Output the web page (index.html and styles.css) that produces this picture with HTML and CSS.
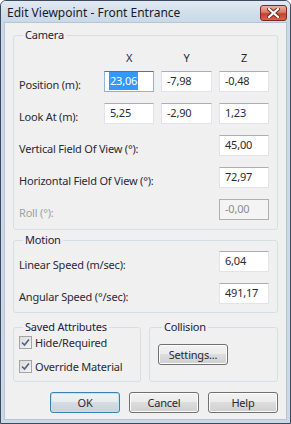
FILE: index.html
```html
<!DOCTYPE html>
<html lang="en">
<head>
  <meta charset="UTF-8" />
  <title>Edit Viewpoint - Front Entrance</title>
  <link rel="stylesheet" href="styles.css">
</head>
<body>
  <div class="window">
    <div class="titlebar">
      <span class="title">Edit Viewpoint - Front Entrance</span>
      <button class="close" aria-label="Close">
        <svg width="13" height="10" viewBox="0 0 13 10">
          <path d="M2 1 L11 9 M11 1 L2 9" stroke="#6b2a20" stroke-width="4" stroke-linecap="square"/>
          <path d="M2 1 L11 9 M11 1 L2 9" stroke="#fff" stroke-width="2.2" stroke-linecap="square"/>
        </svg>
      </button>
    </div>

    <div class="client">
      <fieldset class="group camera">
        <legend>Camera</legend>
        <div class="grid">
          <span></span>
          <span class="axis">X</span>
          <span class="axis">Y</span>
          <span class="axis">Z</span>

          <span class="label">Position (m):</span>
          <div class="field focused"><span class="sel">23,06</span></div>
          <div class="field">-7,98</div>
          <div class="field">-0,48</div>

          <span class="label">Look At (m):</span>
          <div class="field">5,25</div>
          <div class="field">-2,90</div>
          <div class="field">1,23</div>

          <span class="label wide">Vertical Field Of View (°):</span>
          <div class="field last">45,00</div>

          <span class="label wide">Horizontal Field Of View (°):</span>
          <div class="field last">72,97</div>

          <span class="label wide disabled">Roll (°):</span>
          <div class="field last disabled">-0,00</div>
        </div>
      </fieldset>

      <fieldset class="group motion">
        <legend>Motion</legend>
        <div class="grid">
          <span class="label wide">Linear Speed (m/sec):</span>
          <div class="field last">6,04</div>

          <span class="label wide">Angular Speed (°/sec):</span>
          <div class="field last">491,17</div>
        </div>
      </fieldset>

      <div class="pair">
        <fieldset class="group saved">
          <legend>Saved Attributes</legend>
          <label class="check"><span class="box"><svg width="9" height="9" viewBox="0 0 9 9"><path d="M1 4.5 L3.5 7 L8 1.5" fill="none" stroke="#4d6185" stroke-width="1.6"/></svg></span>Hide/Required</label>
          <label class="check"><span class="box"><svg width="9" height="9" viewBox="0 0 9 9"><path d="M1 4.5 L3.5 7 L8 1.5" fill="none" stroke="#4d6185" stroke-width="1.6"/></svg></span>Override Material</label>
        </fieldset>

        <fieldset class="group collision">
          <legend>Collision</legend>
          <button class="btn">Settings...</button>
        </fieldset>
      </div>

      <div class="actions">
        <button class="btn default">OK</button>
        <button class="btn">Cancel</button>
        <button class="btn">Help</button>
      </div>
    </div>
  </div>
</body>
</html>
```

FILE: styles.css
```css
body {
  margin: 0;
  font-family: 'Noto Sans', 'Liberation Sans', sans-serif;
  font-size: 11px;
  letter-spacing: -0.2px;
  color: #2a2a36;
}

.window {
  width: 291px;
  height: 424px;
  box-sizing: border-box;
  border: 1px solid #3c4a5c;
  border-radius: 6px 6px 0 0;
  background: #c9d9e8;
  display: flex;
  flex-direction: column;
}

.titlebar {
  height: 21px;
  display: flex;
  align-items: center;
  justify-content: space-between;
  padding: 0 3px 0 6px;
  background: linear-gradient(#e2eaf3 0%, #d3e0ec 50%, #c9d9e8 100%);
  border-radius: 5px 5px 0 0;
}

.title {
  font-size: 12px;
  letter-spacing: 0;
  color: #1a1a2a;
  margin-top: 1px;
}

.close {
  width: 27px;
  height: 16px;
  margin-top: 2px;
  padding: 0;
  border: 1px solid #7e2a1e;
  border-radius: 3px;
  background: linear-gradient(#eab1a6 0%, #d87b68 45%, #c2432c 55%, #d5654c 100%);
  display: flex;
  align-items: center;
  justify-content: center;
}

.client {
  flex: 1;
  margin: 0 3px 3px;
  background: #f0f0f0;
  border: 1px solid #b6c5d4;
  padding: 0 8px;
  display: flex;
  flex-direction: column;
}

.group {
  margin: 0;
  border: 1px solid #d5dfe5;
  border-radius: 3px;
  min-width: 0;
}

.group legend {
  padding: 0 2px;
  margin-left: 4px;
  color: #22223e;
  line-height: 14px;
}

.grid {
  display: grid;
  grid-template-columns: 1fr 50px 51px 50px;
  column-gap: 7px;
  row-gap: 10px;
  align-items: center;
}

.camera {
  margin-top: 5px;
  padding: 9px 8px 9px 5px;
}

.axis {
  text-align: center;
  line-height: 14px;
  margin-bottom: -5px;
}

.label {
  padding-top: 7px;
  white-space: nowrap;
}

.label.wide {
  grid-column: 1 / 4;
}

.label.disabled {
  color: #a0a0a0;
}

.field {
  height: 21px;
  box-sizing: border-box;
  background: #fff;
  border: 1px solid #e2e3ea;
  border-top-color: #abadb3;
  padding: 0 5px;
  line-height: 17px;
  white-space: nowrap;
}

.field.last {
  grid-column: 4;
}

.field.focused {
  border-color: #8fb4d4;
  border-top-color: #3d7bad;
}

.sel {
  display: inline-block;
  background: #3399ff;
  color: #fff;
  padding: 0 1px;
  margin-left: -1px;
  height: 18px;
}

.field.disabled {
  background: #f4f4f4;
  border-color: #afafaf;
  color: #8d8d8d;
}

.motion {
  margin-top: 3px;
  padding: 3px 8px 8px 5px;
}

.pair {
  display: flex;
  gap: 8px;
  margin-top: 7px;
}

.saved {
  width: 128px;
  box-sizing: border-box;
  padding: 1px 4px 5px 5px;
  display: flex;
  flex-direction: column;
  gap: 9px;
}

.collision {
  flex: 1;
  padding: 10px 8px 16px 8px;
}

.check {
  display: flex;
  align-items: center;
  gap: 3px;
  line-height: 15px;
}

.box {
  width: 11px;
  height: 11px;
  border: 1px solid #a4a4a4;
  background: linear-gradient(135deg, #dcdcdc, #f4f4f4);
  display: flex;
  align-items: center;
  justify-content: center;
}

.btn {
  width: 70px;
  height: 21px;
  padding: 0;
  font-family: inherit;
  font-size: 11px;
  letter-spacing: -0.2px;
  color: #2a2a36;
  border: 1px solid #707070;
  border-radius: 3px;
  background: linear-gradient(#f2f2f2 0%, #ebebeb 50%, #dddddd 50%, #cfcfcf 100%);
  box-shadow: inset 0 0 0 1px #fcfcfc;
}

.btn.default {
  border-color: #3c7fb1;
  box-shadow: inset 0 0 0 1px #bde3f7;
  background: linear-gradient(#f0f3f5 0%, #e6ebee 50%, #d6dde2 50%, #c9d2d8 100%);
}

.actions {
  display: flex;
  justify-content: flex-end;
  gap: 9px;
  margin-top: 10px;
}
```
